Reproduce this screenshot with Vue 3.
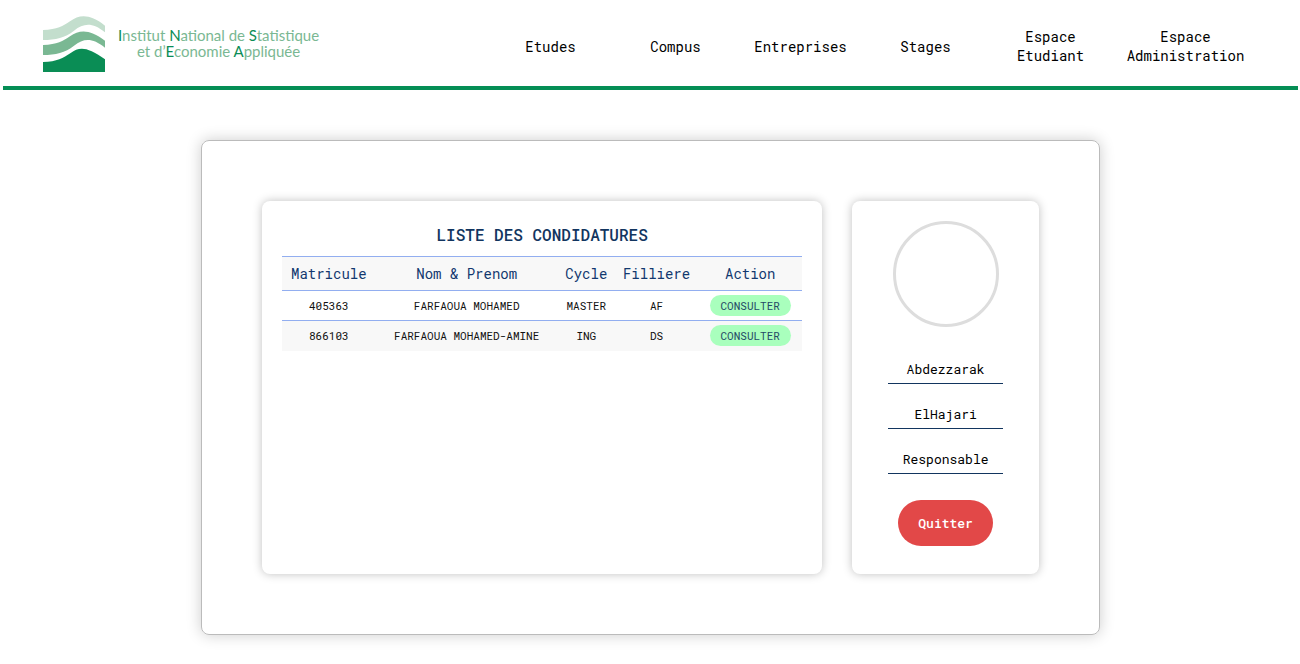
<script setup>
const links = [
  { lines: ['Etudes'] },
  { lines: ['Compus'] },
  { lines: ['Entreprises'] },
  { lines: ['Stages'] },
  { lines: ['Espace', 'Etudiant'] },
  { lines: ['Espace', 'Administration'] },
]
const columns = ['Matricule', 'Nom & Prenom', 'Cycle', 'Filliere', 'Action']
const rows = [
  { id: '405363', name: 'FARFAOUA MOHAMED', cycle: 'MASTER', track: 'AF' },
  { id: '866103', name: 'FARFAOUA MOHAMED-AMINE', cycle: 'ING', track: 'DS' },
]
const profile = ['Abdezzarak', 'ElHajari', 'Responsable']
</script>

<template>
  <div class="page">
    <header class="header">
      <a class="brand" href="#">
        <svg class="mark" viewBox="39 33 186 168" aria-hidden="true">
          <path fill="#c3decd" d="M39 75C82 74 99 63 120 49C149 28 179 26 225 62V82C187 52 162 54 132 77C105 98 77 105 39 105Z" />
          <path fill="#7ab893" d="M39 120C82 119 99 108 120 94C149 73 179 72 225 107V128C187 98 162 99 132 122C105 143 77 150 39 150Z" />
          <path fill="#0a8d55" d="M39 171C82 170 99 159 122 144C149 124 172 125 225 163V201H39Z" />
        </svg>
        <span class="brand-text">
          <span><b>I</b>nstitut <b>N</b>ational de <b>S</b>tatistique</span>
          <span>et d’<b>E</b>conomie <b>A</b>ppliquée</span>
        </span>
      </a>
      <nav class="nav">
        <a v-for="link in links" :key="link.lines.join(' ')" class="nav-link" href="#">
          <span v-for="line in link.lines" :key="line">{{ line }}</span>
        </a>
      </nav>
    </header>

    <main class="board">
      <section class="panel list">
        <h1 class="title">LISTE DES CONDIDATURES</h1>
        <table class="table">
          <colgroup>
            <col class="c-id" />
            <col class="c-name" />
            <col class="c-cycle" />
            <col class="c-track" />
            <col class="c-action" />
          </colgroup>
          <thead>
            <tr><th v-for="c in columns" :key="c" scope="col">{{ c }}</th></tr>
          </thead>
          <tbody>
            <tr v-for="row in rows" :key="row.id">
              <td>{{ row.id }}</td>
              <td>{{ row.name }}</td>
              <td>{{ row.cycle }}</td>
              <td>{{ row.track }}</td>
              <td><button class="consult" type="button">CONSULTER</button></td>
            </tr>
          </tbody>
        </table>
      </section>

      <aside class="panel profile">
        <div class="avatar"></div>
        <div class="fields">
          <p v-for="item in profile" :key="item" class="field">{{ item }}</p>
        </div>
        <button class="quit" type="button">Quitter</button>
      </aside>
    </main>
  </div>
</template>

<style>
body {
  margin: 0;
  background: #fff;
}
</style>

<style scoped>
.page {
  font-family: "Roboto Mono", "Liberation Mono", monospace;
  font-weight: 400;
  color: #000;
}
.page * {
  box-sizing: border-box;
}
.header {
  display: flex;
  align-items: center;
  justify-content: space-between;
  margin: 0 2px 0 3px;
  padding: 16px 40px 14px;
  border-bottom: 4px solid #058e55;
}
.brand {
  display: flex;
  align-items: center;
  gap: 13px;
  text-decoration: none;
}
.mark {
  display: block;
  width: 62px;
  height: 56px;
}
.brand-text {
  display: flex;
  flex-direction: column;
  align-items: center;
  padding-bottom: 2px;
  font: 400 15px/16px Lato, sans-serif;
  color: #7ab893;
  white-space: nowrap;
}
.brand-text b {
  font-weight: 400;
  color: #0a8d55;
}
.nav {
  display: flex;
  align-items: center;
  padding-top: 4px;
}
.nav-link {
  display: flex;
  flex-direction: column;
  align-items: center;
  width: 125px;
  font-size: 14px;
  line-height: 19px;
  color: #000;
  text-decoration: none;
}
.nav-link:last-child {
  width: 145px;
}
.board {
  display: grid;
  grid-template-columns: 3fr 1fr;
  gap: 30px;
  margin: 50px 200px 29px 201px;
  padding: 60px;
  border: 1px solid #bbb;
  border-radius: 8px;
  box-shadow: 0 0 15px rgba(0, 0, 0, 0.2);
}
.panel {
  border-radius: 8px;
  background: #fff;
  box-shadow: 0 0 10px rgba(0, 0, 0, 0.25);
}
.list {
  padding: 20px;
}
.title {
  margin: 0 0 7px;
  font-size: 16px;
  font-weight: 500;
  line-height: 28px;
  text-align: center;
  color: #12355f;
}
.table {
  width: 100%;
  table-layout: fixed;
  border-collapse: collapse;
  text-align: center;
}
.c-id { width: 18%; }
.c-name { width: 35%; }
.c-cycle { width: 11%; }
.c-track { width: 16%; }
.c-action { width: 20%; }
.table tr {
  border-top: 1px solid #92aef0;
}
.table th {
  height: 34px;
  padding: 0;
  font-size: 14px;
  font-weight: 400;
  color: #12386f;
}
.table td {
  height: 30px;
  padding: 0;
  font-size: 11px;
  color: #111;
}
.table thead tr,
.table tbody tr:nth-child(even) {
  background: #f8f8f8;
}
.consult {
  padding: 0 11px;
  border: 0;
  border-radius: 11px;
  background: #a9ffbd;
  font: 400 11px/21px "Roboto Mono", "Liberation Mono", monospace;
  color: #264a66;
}
.profile {
  display: flex;
  flex-direction: column;
  align-items: center;
  padding: 20px 20px 28px;
}
.avatar {
  width: 106px;
  height: 106px;
  border: 3px solid #ddd;
  border-radius: 50%;
}
.fields {
  display: flex;
  flex-direction: column;
  gap: 20px;
  width: 115px;
  margin: 32px 0 26px;
}
.field {
  margin: 0;
  padding-bottom: 4px;
  border-bottom: 1px solid #12355f;
  font-size: 13px;
  line-height: 20px;
  text-align: center;
}
.quit {
  padding: 0 20px;
  border: 0;
  border-radius: 23px;
  background: #e24848;
  font: 500 13px/46px "Roboto Mono", "Liberation Mono", monospace;
  color: #fff;
}
</style>
